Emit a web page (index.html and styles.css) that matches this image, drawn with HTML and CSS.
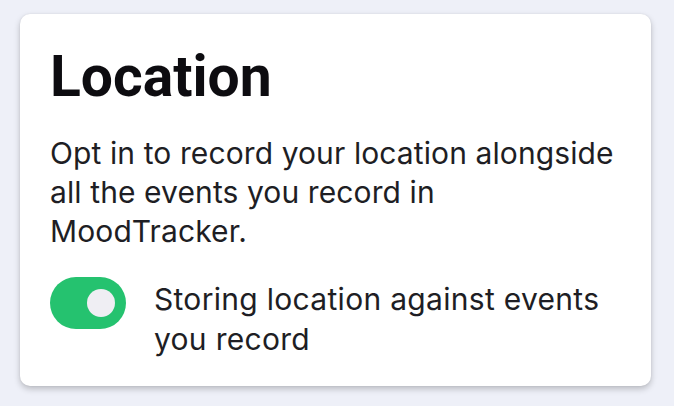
FILE: index.html
```html
<!DOCTYPE html>
<html lang="en">
<head>
    <meta charset="UTF-8">
    <meta name="viewport" content="width=device-width, initial-scale=1.0">
    <title>Location</title>
    <link rel="stylesheet" href="styles.css">
</head>
<body>

    <div class="card">
        <h2>Location</h2>
        <p class="intro">Opt in to record your location alongside all the events you record in MoodTracker.</p>

        <label class="setting">
            <span class="switch on"><span class="knob"></span></span>
            <span class="setting-text">Storing location against events you record</span>
        </label>
    </div>

</body>
</html>
```

FILE: styles.css
```css
body {
    margin: 0;
    font-family: "Inter", "Noto Sans", sans-serif;
    background-color: #eef0f8;
    color: #1e1e24;
    padding: 14px 23px 20px 20px;
}

.card {
    background: white;
    border-radius: 10px;
    box-shadow: 0 3px 6px rgba(0, 0, 0, 0.22), 0 0 2px rgba(0, 0, 0, 0.08);
    padding: 34px 30px 20px 30px;
    height: 318px;
}

h2 {
    font-family: "Roboto", sans-serif;
    font-weight: 700;
    font-size: 57px;
    line-height: 57px;
    margin: 0;
    color: #0d0c10;
}

.intro {
    font-size: 30px;
    line-height: 39px;
    letter-spacing: 0.1px;
    margin: 29px 0 0 0;
}

.setting {
    display: flex;
    align-items: flex-start;
    gap: 28px;
    margin-top: 26px;
}

.switch {
    flex: none;
    width: 76px;
    height: 52px;
    border-radius: 26px;
    background-color: #25c26f;
    display: flex;
    align-items: center;
    justify-content: flex-end;
    padding-right: 11px;
    box-sizing: border-box;
}

.knob {
    width: 28px;
    height: 28px;
    border-radius: 50%;
    background-color: #efeef3;
}

.setting-text {
    font-size: 30px;
    line-height: 40px;
    letter-spacing: 0.3px;
    padding-top: 2px;
}
```
